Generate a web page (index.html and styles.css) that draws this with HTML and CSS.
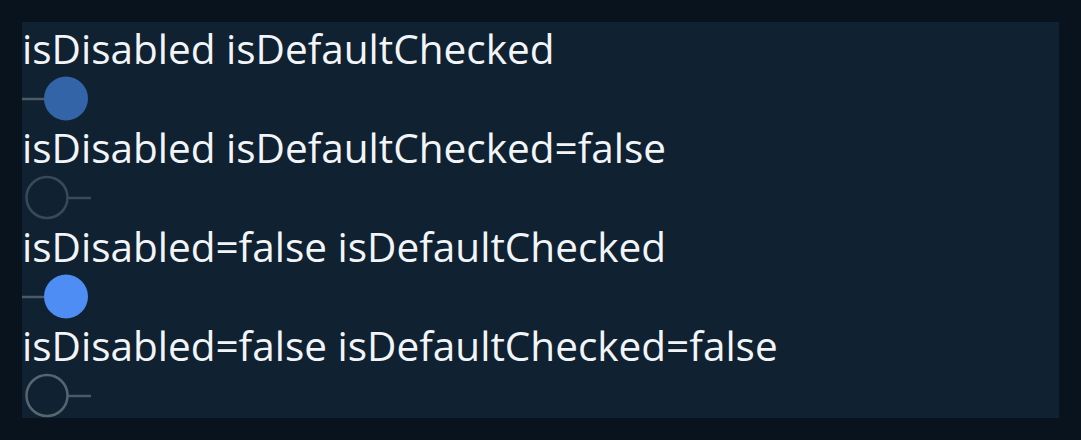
FILE: index.html
```html
<!DOCTYPE html>
<html>
<head>
<meta charset="utf-8">
<link rel="stylesheet" href="styles.css">
</head>
<body>
<div class="panel">
  <div class="row">
    <div class="label">isDisabled isDefaultChecked</div>
    <svg class="switch" width="70" height="45" viewBox="0 0 70 45">
      <line x1="0" y1="23" x2="24" y2="23" class="track"/>
      <circle cx="44" cy="22.5" r="22" class="knob disabled-on"/>
    </svg>
  </div>
  <div class="row">
    <div class="label">isDisabled isDefaultChecked=false</div>
    <svg class="switch" width="70" height="45" viewBox="0 0 70 45">
      <line x1="45" y1="23" x2="69" y2="23" class="track dim"/>
      <circle cx="25" cy="22.5" r="20.5" class="ring dim"/>
    </svg>
  </div>
  <div class="row">
    <div class="label">isDisabled=false isDefaultChecked</div>
    <svg class="switch" width="70" height="45" viewBox="0 0 70 45">
      <line x1="0" y1="23" x2="24" y2="23" class="track"/>
      <circle cx="44" cy="22.5" r="22" class="knob on"/>
    </svg>
  </div>
  <div class="row">
    <div class="label">isDisabled=false isDefaultChecked=false</div>
    <svg class="switch" width="70" height="45" viewBox="0 0 70 45">
      <line x1="45" y1="23" x2="69" y2="23" class="track"/>
      <circle cx="25" cy="22.5" r="20.5" class="ring"/>
    </svg>
  </div>
</div>
</body>
</html>
```
FILE: styles.css
```css
html, body {
  margin: 0;
  padding: 0;
  background: #09131d;
}
body {
  padding: 22px;
}
.panel {
  background: #102131;
  display: flex;
  flex-direction: column;
}
.row {
  display: flex;
  flex-direction: column;
  align-items: flex-start;
  height: 99px;
}
.label {
  font-family: "Open Sans", "DejaVu Sans", sans-serif;
  font-size: 40.5px;
  line-height: 54px;
  height: 54px;
  color: #f2f5f8;
  white-space: nowrap;
}
.switch {
  display: block;
}
.track {
  stroke: #4b5b66;
  stroke-width: 2.5;
}
.track.dim {
  stroke: #3a4b58;
}
.knob.disabled-on {
  fill: #3464a8;
}
.knob.on {
  fill: #4d8df4;
}
.ring {
  fill: none;
  stroke: #56656f;
  stroke-width: 2.5;
}
.ring.dim {
  stroke: #38495a;
}
```
